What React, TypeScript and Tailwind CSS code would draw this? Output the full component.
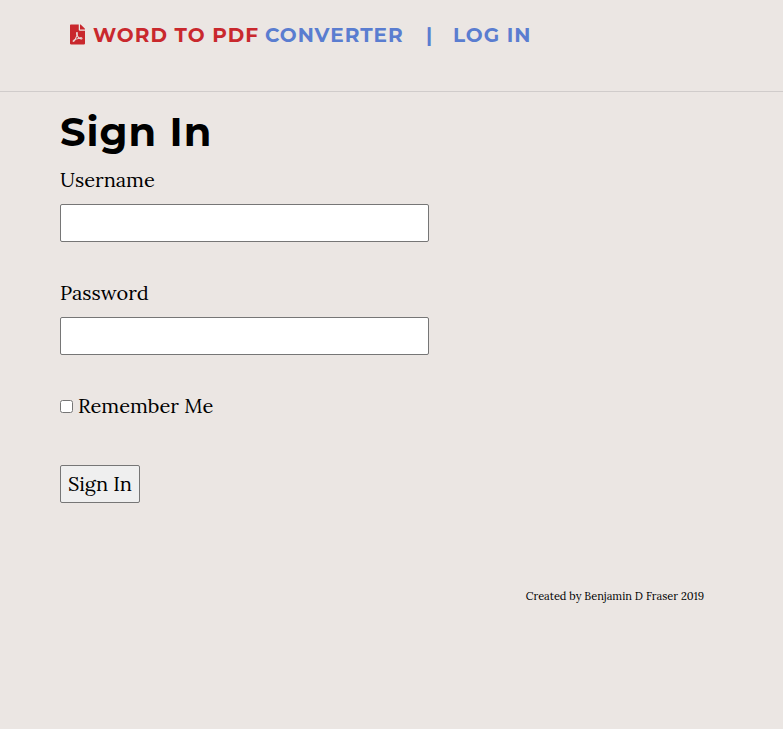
import { FaFilePdf } from 'react-icons/fa';

const serif = "font-['Lora','Noto_Serif','Liberation_Serif',serif]";
const sans = "font-['Montserrat','Open_Sans',sans-serif]";

export default function App() {
  return (
    <div className={`min-h-screen bg-[#ebe6e3] text-black antialiased ${serif}`}>
      <header className={`flex h-[92px] items-start border-b border-[#d0cccb] pl-[70px] pt-[20px] text-[20px] font-bold leading-[30px] tracking-[1px] ${sans}`}>
        <FaFilePdf className="mt-[4px] mr-2 h-[21px] w-[15px] text-[#c9282d]" />
        <span className="w-[172px] whitespace-nowrap text-[#c9282d]">WORD TO PDF</span>
        <span className="w-[161px] whitespace-nowrap text-[#5a7dd0]">CONVERTER</span>
        <span className="w-[27px] text-[#5a7dd0]">|</span>
        <span className="whitespace-nowrap text-[#5a7dd0]">LOG IN</span>
      </header>
      <main className="pl-[60px] pt-[16px]">
        <h1 className={`h-[56px] text-[40px] font-bold leading-[48px] tracking-[1px] ${sans}`}>Sign In</h1>
        <form className="flex flex-col items-start text-[20px] leading-[32px]">
          <label>Username</label>
          <input className="mt-2 h-[38px] w-[369px] rounded-[2px] border border-[#767676] bg-white" />
          <label className="mt-[35px]">Password</label>
          <input className="mt-2 h-[38px] w-[369px] rounded-[2px] border border-[#767676] bg-white" />
          <label className="mt-[35px] flex items-center gap-[5px]"><input type="checkbox" className="size-[13px]" />Remember Me</label>
          <button className="mt-[43px] h-[38px] w-[80px] rounded-[2px] border border-[#767676] bg-[#efefef]">Sign In</button>
        </form>
      </main>
      <footer className="pr-[79px] pt-[85px] text-right text-[11px] leading-[16px]">Created by Benjamin D Fraser 2019</footer>
    </div>
  );
}
